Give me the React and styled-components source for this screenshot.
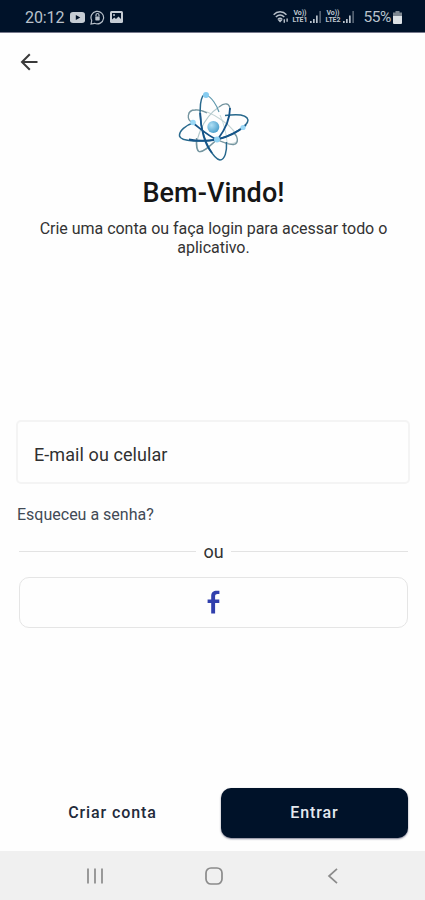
import styled, { createGlobalStyle } from "styled-components";

const GlobalStyle = createGlobalStyle`
    * {
        box-sizing: border-box;
    }
    body {
        margin: 0;
        background: #fefefe;
        font-family: Roboto, "Liberation Sans", sans-serif;
    }
    button, input {
        font-family: inherit;
    }
`

const BackArrow = () => (
    <svg width="20" height="20" viewBox="0 0 20 20" fill="none" stroke="#3a3a3a" strokeWidth="2">
        <path d="M18.5 10H3M10.8 2.200L3 10l7.800 7.800" />
    </svg>
)

const AtomLogo = () => (
    <LogoSvg width="100" height="80" viewBox="0 0 100 80" fill="none">
        <defs>
            <radialGradient id="nucleus" cx="0.35" cy="0.35" r="0.7">
                <stop offset="0" stopColor="#b0e0f6" />
                <stop offset="1" stopColor="#4b9fcb" />
            </radialGradient>
        </defs>
        {/* far orbits */}
        <path d="M28 38C21 35 22 25 30 25C46 24 71 43 72.500 54C72 61 61 59 52 54.500" stroke="#c3d3d4" strokeWidth="1.100" />
        <path d="M52 54.500C45 61 38 68 34 66.500C28 59 37 33 54 22" stroke="#b3c9cd" strokeWidth="1.100" />
        <path d="M28 38C21 35 22 25 30 25C34 24.500 38 26 42 28M69 48C73 52 74 58 69 59.500C64 60 57 57 52 54.500M31.500 53C31 60 32 66 34 66.500C38 68 45 61 52 54.500M54 22C60 17 65 18 65 25" stroke="#7595a0" strokeWidth="1.300" />
        {/* near orbits */}
        <path d="M28 38C21 40 14 46 14.500 51C16 57 37 57 52 54.500C68 50 83 41 83 35C82 29 71 29 60 30.500" stroke="#28698d" strokeWidth="1.500" />
        <path d="M41 10C47 12 52 21 54 27" stroke="#5f98ad" strokeWidth="1.200" />
        <path d="M55 30C59 39 62 51 62 59" stroke="#c5dadd" strokeWidth="1" />
        <path d="M41 9C35 9 34 26 36 38C39 58 49 74 55 75C60 75 62 66 61.500 57" stroke="#28698d" strokeWidth="1.500" />
        <path d="M35.200 28C35.500 44 40 60 47 68M28 38C36 44 43 51 52 54.500C63 52 73 47 81 40M65 23C65 35 59 46 53 54M24 54.500C34 56.500 43 56 52 54.500" stroke="#155488" strokeWidth="1.800" />
        <circle cx="48.300" cy="42" r="6" fill="url(#nucleus)" />
        <circle cx="41" cy="10" r="3" fill="#86ccf0" />
        <circle cx="28" cy="37.500" r="2.800" fill="#9bd8f6" />
        <circle cx="78" cy="42.500" r="2.600" fill="#9bd8f6" />
        <circle cx="52" cy="54.500" r="3" fill="#8fd2f3" />
    </LogoSvg>
)

const FacebookLogo = () => (
    <svg width="14" height="24" viewBox="0 0 14 24" fill="#303fad">
        <path d="M4.200 23.500V13H.6V9.400h3.600V6.300C4.200 2.500 6.400.8 9.700.8h2.700v3.200H10.600C9 4 8.100 4.700 8.100 6.400v3h4.200V13H8.100v10.500z" />
    </svg>
)

const Signal = () => (
    <svg width="12" height="12" viewBox="0 0 12 12" fill="#b7c0ca">
        <path d="M0 10h1.700v2H0zM3 8h1.700v4H3zM6 4.500h1.700V12H6z" />
        <path d="M9.300 0h1.700v12H9.300z" opacity="0.45" />
    </svg>
)

export default function App() {
    return (
        <Screen>
            <GlobalStyle />
            <StatusBar>
                <Clock>20:12</Clock>
                <StatusIcons>
                    <svg width="15" height="11" viewBox="0 0 15 12" preserveAspectRatio="none">
                        <rect width="15" height="12" rx="3" fill="#c5ccd4" />
                        <path d="M5.800 3.200v5.600l4.500-2.800z" fill="#001229" />
                    </svg>
                    <svg width="15" height="15" viewBox="0 0 15 15" fill="none" stroke="#b7c0ca" strokeWidth="1.200">
                        <path d="M1 14l.7-3.500A6.300 6.300 0 1 1 4.600 13.300z" />
                        <rect x="5.300" y="6.400" width="4.400" height="4" rx="0.700" fill="#b7c0ca" stroke="none" />
                        <path d="M6 6.500V5a1.500 1.500 0 0 1 3 0v1.500" />
                    </svg>
                    <svg width="13" height="12" viewBox="0 0 13 12">
                        <rect width="13" height="12" rx="1.500" fill="#c5ccd4" />
                        <path d="M2 2h9v6L8.500 5.500 6 8 4.300 6.500 2 8.500z" fill="#001229" />
                        <circle cx="4" cy="4" r="1" fill="#c5ccd4" />
                    </svg>
                </StatusIcons>
                <Network>
                    <svg width="16" height="14" viewBox="0 0 17 14" fill="none" stroke="#b7c0ca" strokeWidth="1.500">
                        <path d="M.7 4.500C4.500.4 10.500.4 14.300 4.500M3 7C5.800 4.200 9.200 4.200 12 7M5.300 9.300c1.400-1.300 3-1.300 4.400 0" />
                        <path d="M6.200 10.300L7.500 11.700l1.300-1.400z" fill="#b7c0ca" />
                        <path d="M12 9.500v3.500M15 8.500v3.500" />
                    </svg>
                    <Lte>Vo))<br />LTE1</Lte>
                    <Signal />
                    <Lte>Vo))<br />LTE2</Lte>
                    <Signal />
                </Network>
                <Percent>55%</Percent>
                <svg width="9" height="13" viewBox="0 0 9 13">
                    <path d="M2.500 0h4v1.500H9V6H0V1.500h2.500z" fill="#7d8791" />
                    <path d="M0 5h9v7a1 1 0 0 1-1 1H1a1 1 0 0 1-1-1z" fill="#dce1e5" />
                </svg>
            </StatusBar>

            <BackButton aria-label="Voltar"><BackArrow /></BackButton>
            <Header>
                <AtomLogo />
                <Title>Bem-Vindo!</Title>
                <Subtitle>Crie uma conta ou faça login para acessar todo o aplicativo.</Subtitle>
            </Header>

            <Form>
                <EmailInput placeholder="E-mail ou celular" />
                <ForgotLink>Esqueceu a senha?</ForgotLink>
                <Divider><span>ou</span></Divider>
                <FacebookButton aria-label="Facebook"><FacebookLogo /></FacebookButton>
            </Form>

            <Actions>
                <ActionButton>Criar conta</ActionButton>
                <ActionButton $primary>Entrar</ActionButton>
            </Actions>

            <NavBar>
                <svg width="18" height="18" viewBox="0 0 18 18" stroke="#8b8b8b" strokeWidth="1.700">
                    <path d="M2 1.500v15M9 1.500v15M16 1.500v15" />
                </svg>
                <svg width="18" height="18" viewBox="0 0 18 18" fill="none" stroke="#8b8b8b" strokeWidth="1.700">
                    <rect x="1" y="1" width="16" height="16" rx="5" />
                </svg>
                <svg width="18" height="18" viewBox="0 0 18 18" fill="none" stroke="#8b8b8b" strokeWidth="1.700">
                    <path d="M13 1.800L5 9l8 7.200" />
                </svg>
            </NavBar>
        </Screen>
    )
}

const Screen = styled.div`
    display: flex;
    flex-direction: column;
    width: 425px;
    height: 900px;
    overflow: hidden;
    background: #fefefe;
`
const StatusBar = styled.div`
    display: flex;
    align-items: center;
    height: 33px;
    padding: 2px 23px 0 25px;
    background: #001229;
    border-bottom: 1px solid #77798c;
`
const Clock = styled.span`
    width: 45px;
    color: #bac2cc;
    font-size: 16px;
    letter-spacing: -0.1px;
`
const StatusIcons = styled.div`
    display: flex;
    align-items: center;
    gap: 5px;
`
const Network = styled.div`
    display: flex;
    align-items: center;
    margin-left: auto;
    gap: 2px;
`
const Lte = styled.span`
    width: 17px;
    color: #bfc7cf;
    font-size: 7px;
    font-weight: 700;
    line-height: 7px;
    letter-spacing: -0.1px;
    text-align: center;
`
const Percent = styled.span`
    margin: 0 2px 0 8px;
    color: #bac2cc;
    font-size: 15.5px;
    letter-spacing: -0.4px;
`
const BackButton = styled.button`
    display: flex;
    align-self: flex-start;
    margin: 19px 0 0 19px;
    padding: 0;
    border: 0;
    background: none;
`
const Header = styled.header`
    display: flex;
    flex-direction: column;
    align-items: center;
    height: 336px;
    padding-top: 13px;
`
const LogoSvg = styled.svg`
    margin-left: 4px;
`
const Title = styled.h1`
    margin: 11px 0 0 2px;
    color: #161616;
    font-size: 27px;
    font-weight: 500;
    line-height: 34px;
    letter-spacing: 0.1px;
`
const Subtitle = styled.p`
    width: 370px;
    margin: 9px 0 0 2px;
    color: #333;
    font-size: 16px;
    line-height: 19px;
    letter-spacing: -0.03px;
    text-align: center;
`
const Form = styled.div`
    display: flex;
    flex-direction: column;
    padding: 12px 15px 0 16px;
`
const EmailInput = styled.input`
    height: 64px;
    padding: 4px 16px 0;
    border: 2px solid #f4f4f4;
    border-radius: 5px;
    background: #fefefe;
    font-size: 18px;
    letter-spacing: 0.08px;
    outline: none;
    &::placeholder {
        color: #303030;
        opacity: 1;
    }
`
const ForgotLink = styled.a`
    margin: 21px 0 0 1px;
    color: #424a55;
    font-size: 16px;
    line-height: 20px;
`
const Divider = styled.div`
    display: flex;
    align-items: center;
    gap: 7px;
    height: 22px;
    margin: 15px 2px 0 3px;
    color: #333;
    font-size: 18px;
    &::before, &::after {
        content: "";
        flex: 1;
        height: 1px;
        background: #e3e3e3;
    }
`
const FacebookButton = styled.button`
    display: flex;
    align-items: center;
    justify-content: center;
    height: 51px;
    margin: 15px 2px 0 3px;
    padding: 0 0 2px;
    border: 1px solid #e5e5e5;
    border-radius: 10px;
    background: #fefefe;
`
const Actions = styled.div`
    display: grid;
    grid-template-columns: 187px 187px;
    gap: 15px;
    margin-top: auto;
    padding: 0 17px 13px 19px;
`
const ActionButton = styled.button`
    height: 50px;
    padding: 0 0 2px;
    border: 0;
    border-radius: 10px;
    background: ${(props) => props.$primary ? "#001229" : "transparent"};
    color: ${(props) => props.$primary ? "#e4e9ef" : "#232b3b"};
    box-shadow: ${(props) => props.$primary ? "0 1px 2px rgba(0, 0, 40, 0.5)" : "none"};
    font-size: 16px;
    font-weight: 500;
    letter-spacing: 0.9px;
`
const NavBar = styled.nav`
    display: flex;
    align-items: center;
    justify-content: space-between;
    height: 49px;
    padding: 1px 83px 0 86px;
    background: #f0f0f0;
`
